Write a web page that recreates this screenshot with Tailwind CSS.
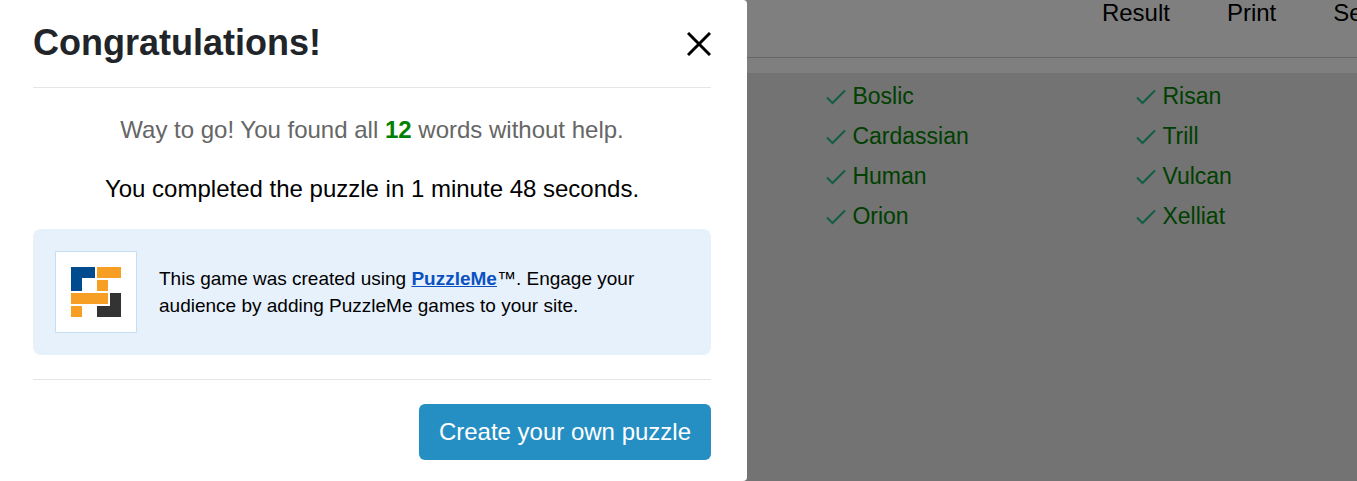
<!DOCTYPE html>
<html lang="en">
<head>
    <meta charset="UTF-8">
    <meta name="viewport" content="width=device-width, initial-scale=1.0">
    <title>Word Search</title>
    <script src="https://cdn.jsdelivr.net/npm/@tailwindcss/browser@4"></script>
</head>
<body class="relative min-h-screen overflow-hidden bg-white font-['Liberation_Sans',Arial,sans-serif] text-black">
    <svg class="hidden">
        <symbol id="check" viewBox="0 0 20 16">
            <path d="M1 8.5 6.5 14 19 1.5" fill="none" stroke="#22b889" stroke-width="2"/>
        </symbol>
    </svg>

    <!-- Game page -->
    <div class="flex min-h-screen flex-col">
        <header class="overflow-hidden border-b border-[#cccccc] pb-[31px]">
            <nav class="flex gap-[57px] pl-[81.2%] text-2xl leading-[26px] whitespace-nowrap">
                <a href="#">Result</a>
                <a href="#">Print</a>
                <a href="#">Settings</a>
            </nav>
        </header>
        <main class="mt-[15px] flex-1 bg-[#e6e6e6] pt-[3px] pl-[60.9%]">
            <ul class="grid grid-flow-col grid-cols-[repeat(2,310px)] grid-rows-4 text-[23px] leading-10 text-[#008000]">
                <li class="flex items-center gap-1.5"><svg class="mt-0.5 h-4 w-5"><use href="#check"/></svg>Boslic</li>
                <li class="flex items-center gap-1.5"><svg class="mt-0.5 h-4 w-5"><use href="#check"/></svg>Cardassian</li>
                <li class="flex items-center gap-1.5"><svg class="mt-0.5 h-4 w-5"><use href="#check"/></svg>Human</li>
                <li class="flex items-center gap-1.5"><svg class="mt-0.5 h-4 w-5"><use href="#check"/></svg>Orion</li>
                <li class="flex items-center gap-1.5"><svg class="mt-0.5 h-4 w-5"><use href="#check"/></svg>Risan</li>
                <li class="flex items-center gap-1.5"><svg class="mt-0.5 h-4 w-5"><use href="#check"/></svg>Trill</li>
                <li class="flex items-center gap-1.5"><svg class="mt-0.5 h-4 w-5"><use href="#check"/></svg>Vulcan</li>
                <li class="flex items-center gap-1.5"><svg class="mt-0.5 h-4 w-5"><use href="#check"/></svg>Xelliat</li>
            </ul>
        </main>
    </div>

    <!-- Backdrop and success modal -->
    <div class="absolute inset-0 bg-black/50">
        <div role="dialog" aria-labelledby="title" class="min-h-full w-[55.05%] rounded-r-sm bg-white pr-9 pl-[33px]">
            <div class="flex items-center justify-between border-b border-[#e5e5e5] pt-[22px] pb-[21px]">
                <h1 id="title" class="text-4xl leading-[42px] font-bold text-[#212529] pb-0.5">Congratulations!</h1>
                <button type="button" aria-label="Close">
                    <svg class="size-6" viewBox="0 0 24 24" fill="none" stroke="#000" stroke-width="3"><path d="M1 1 23 23M23 1 1 23"/></svg>
                </button>
            </div>
            <div class="border-b border-[#e5e5e5] pt-6 pb-6 text-center text-2xl leading-9">
                <p class="text-[#666666]">Way to go! You found all <b class="text-[#008000]">12</b> words without help.</p>
                <p class="mt-[23px]">You completed the puzzle in 1 minute 48 seconds.</p>
                <div class="mt-[22px] flex items-center gap-[22px] rounded-lg bg-[#e7f1fc] p-[22px] text-left text-[19px] leading-[27px]">
                    <svg class="size-[82px] shrink-0" viewBox="0 0 82 82">
                        <path fill="#fff" stroke="#c5def5" d="M.5.5h81v81H.5z"/>
                        <path fill="#004b8d" d="M16 16h24v11H27v13H16z"/>
                        <path fill="#f79f24" d="M42 16h24v11H42zM42 29h11v11H42zM16 42h37v11H16zM16 55h11v11H16z"/>
                        <path fill="#333" d="M55 42h11v24H42V55h13z"/>
                    </svg>
                    <p>This game was created using <a href="#" class="font-bold text-[#0b51c1] underline">PuzzleMe</a>™. Engage your audience by adding PuzzleMe games to your site.</p>
                </div>
            </div>
            <div class="flex justify-end pt-6">
                <button type="button" class="rounded-md bg-[#258fc4] px-5 py-2.5 text-2xl leading-9 text-white">Create your own puzzle</button>
            </div>
        </div>
    </div>
</body>
</html>
